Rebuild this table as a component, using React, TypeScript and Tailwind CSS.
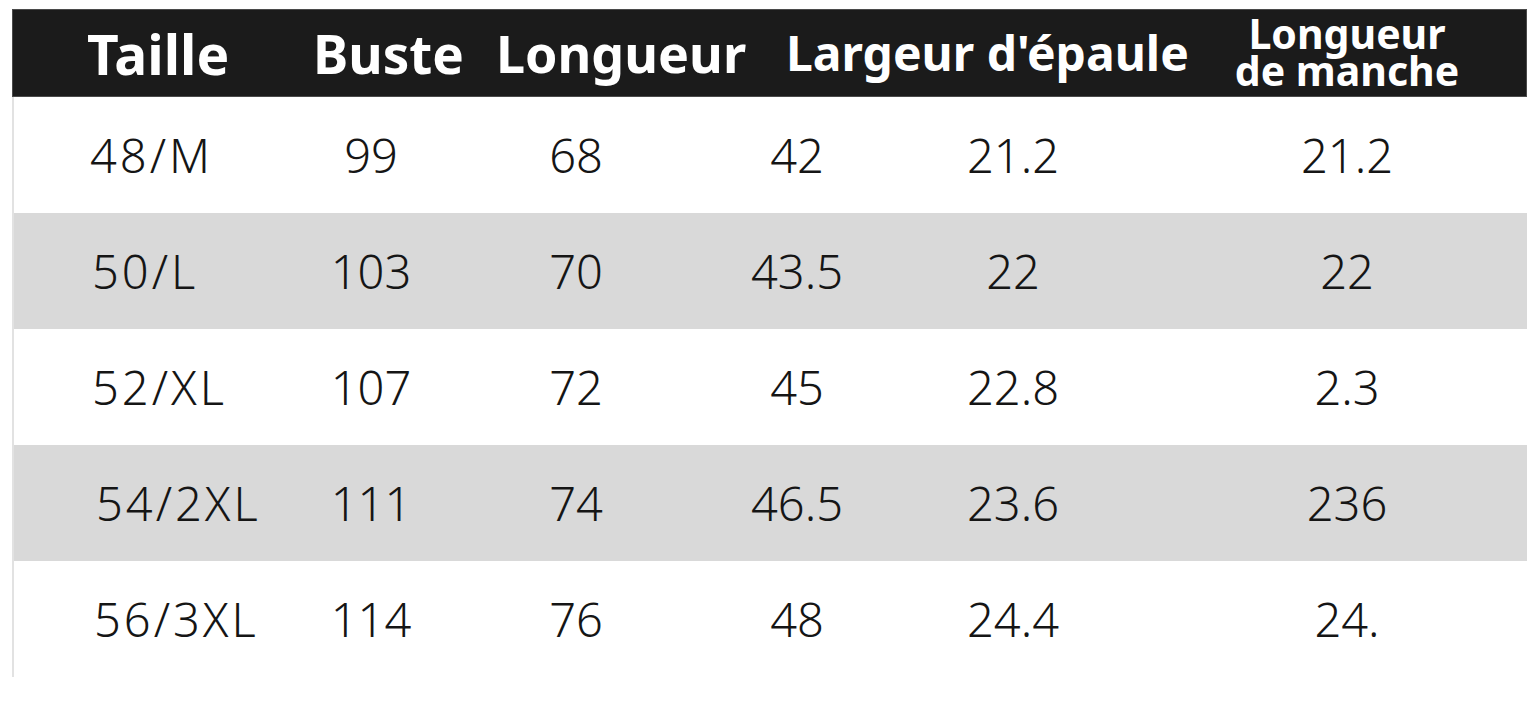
const rows = [
  { size: '48/M', pad: 'pl-[76px]', values: ['99', '68', '42', '21.2', '21.2'] },
  { size: '50/L', pad: 'pl-[78px]', values: ['103', '70', '43.5', '22', '22'] },
  { size: '52/XL', pad: 'pl-[78px]', values: ['107', '72', '45', '22.8', '2.3'] },
  { size: '54/2XL', pad: 'pl-[82px]', values: ['111', '74', '46.5', '23.6', '236'] },
  { size: '56/3XL', pad: 'pl-[80px]', values: ['114', '76', '48', '24.4', '24.'] },
];

// body column widths, centred on the reference's number columns
const cellWidths = ['w-[204px]', 'w-[206px]', 'w-[236px]', 'w-[196px]'];

export default function App() {
  return (
    <div className="w-[1527px] h-[704px] bg-white overflow-hidden pt-[9px] font-['Noto_Sans',sans-serif]">
      {/* header bar */}
      <div className="ml-[12px] h-[88px] bg-[#1b1b1b] border border-[#4a4a4a] flex items-center text-white font-bold">
        <div className="w-[300px] pl-[74px] text-[55px] leading-none">Taille</div>
        <div className="w-[183px] text-[53px] leading-none">Buste</div>
        <div className="w-[290px] text-[52px] leading-none">Longueur</div>
        <div className="w-[434px] text-[48px] leading-none">Largeur d'épaule</div>
        <div className="w-[254px] text-center text-[41px] leading-[37px] -mt-[2px]">
          <div>Longueur</div>
          <div>de manche</div>
        </div>
      </div>

      {/* rows */}
      <div className="ml-[12px] border-l-2 border-[#e2e2e2]">
        {rows.map((row, i) => (
          <div
            key={row.size}
            className={`flex items-center h-[116px] text-[47px] text-[#151515] font-light ${
              i % 2 === 1 ? 'bg-[#d9d9d9]' : 'bg-white'
            }`}
          >
            <div className={`w-[255px] tracking-[3px] ${row.pad}`}>{row.size}</div>
            {row.values.slice(0, 4).map((v, j) => (
              <div key={j} className={`${cellWidths[j]} text-center`}>
                {v}
              </div>
            ))}
            <div className="ml-[118px] w-[236px] text-center">{row.values[4]}</div>
          </div>
        ))}
      </div>
    </div>
  );
}
